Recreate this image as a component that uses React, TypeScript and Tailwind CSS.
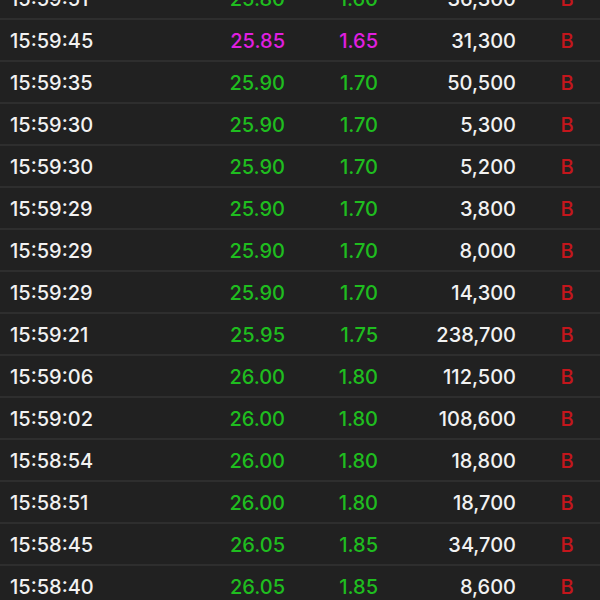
import React from "react"

type Trade = {
  time: string
  price: string
  change: string
  volume: string
  up?: boolean
}

const trades: Trade[] = [
  { time: "15:59:51", price: "25.80", change: "1.60", volume: "36,300" },
  { time: "15:59:45", price: "25.85", change: "1.65", volume: "31,300", up: true },
  { time: "15:59:35", price: "25.90", change: "1.70", volume: "50,500" },
  { time: "15:59:30", price: "25.90", change: "1.70", volume: "5,300" },
  { time: "15:59:30", price: "25.90", change: "1.70", volume: "5,200" },
  { time: "15:59:29", price: "25.90", change: "1.70", volume: "3,800" },
  { time: "15:59:29", price: "25.90", change: "1.70", volume: "8,000" },
  { time: "15:59:29", price: "25.90", change: "1.70", volume: "14,300" },
  { time: "15:59:21", price: "25.95", change: "1.75", volume: "238,700" },
  { time: "15:59:06", price: "26.00", change: "1.80", volume: "112,500" },
  { time: "15:59:02", price: "26.00", change: "1.80", volume: "108,600" },
  { time: "15:58:54", price: "26.00", change: "1.80", volume: "18,800" },
  { time: "15:58:51", price: "26.00", change: "1.80", volume: "18,700" },
  { time: "15:58:45", price: "26.05", change: "1.85", volume: "34,700" },
  { time: "15:58:40", price: "26.05", change: "1.85", volume: "8,600" },
  { time: "15:58:38", price: "26.05", change: "1.85", volume: "2,000" }
]

const TradeRow: React.FC<{ trade: Trade }> = ({ trade }) => {
  const tone = trade.up ? "text-[#e01fe0]" : "text-[#1fbd1f]"
  return (
    <div className="flex items-center h-[42px] pl-[10px] pt-[1px] border-b-2 border-[#2e2e2e] text-[20px] leading-none font-medium">
      <span className="w-[185px] text-[#f2f2f2]">{trade.time}</span>
      <span className={`w-[90px] text-right ${tone}`}>{trade.price}</span>
      <span className={`w-[93px] text-right ${tone}`}>{trade.change}</span>
      <span className="w-[138px] text-right text-[#f2f2f2]">{trade.volume}</span>
      <span className="ml-[18px] w-[66px] text-center text-[#c4161c]">B</span>
    </div>
  )
}

export default function App() {
  return (
    <div
      className="h-[600px] w-[600px] overflow-hidden bg-[#212121]"
      style={{ fontFamily: "Inter, 'Liberation Sans', sans-serif" }}>
      <div className="-mt-[22px]">
        {trades.map((t, i) => (
          <TradeRow key={i} trade={t} />
        ))}
      </div>
    </div>
  )
}
